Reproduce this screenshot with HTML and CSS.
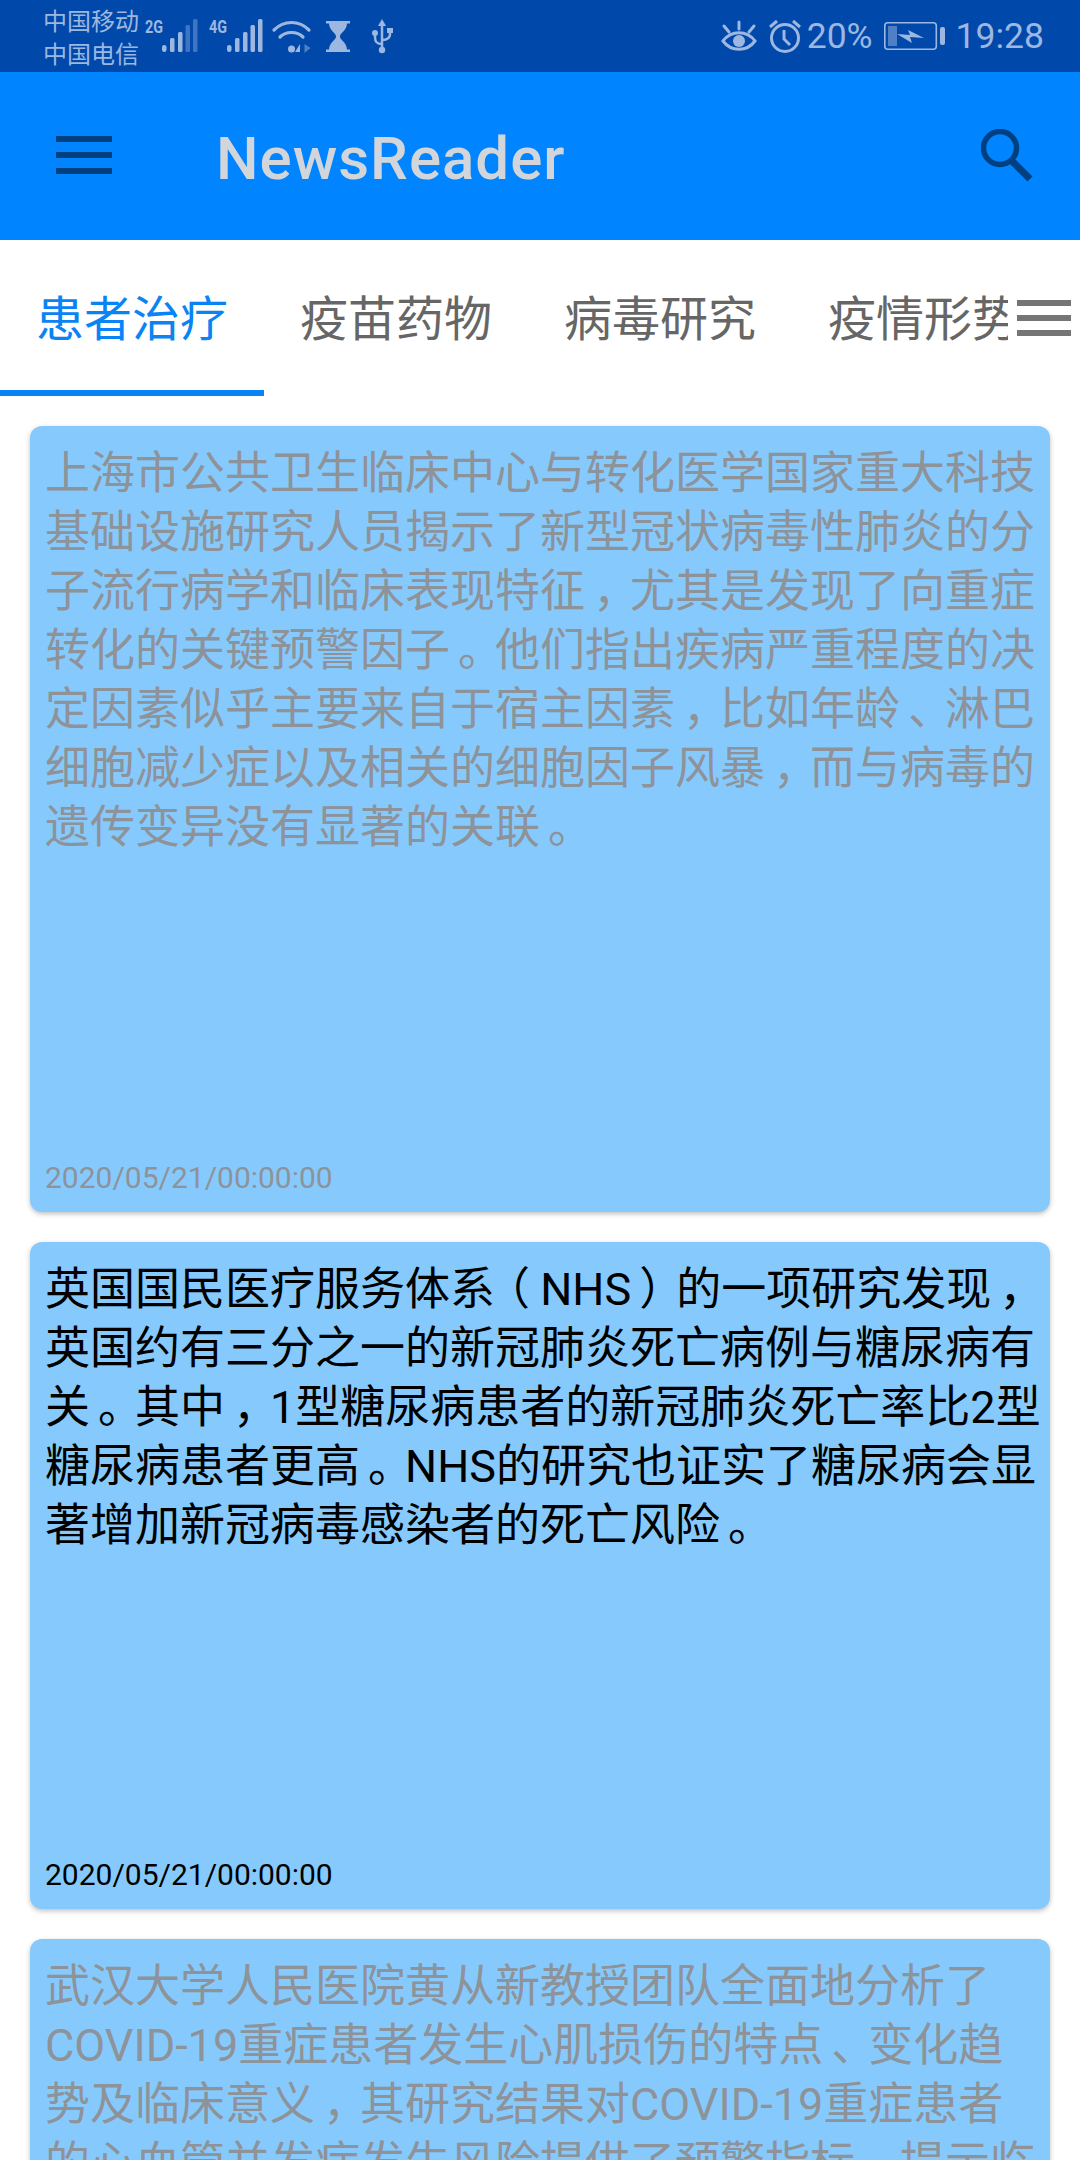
FILE: index.html
```html
<!DOCTYPE html>
<html lang="zh-CN">
<head>
  <meta charset="UTF-8">
  <title>NewsReader</title>
  <link rel="stylesheet" href="styles.css">
</head>
<body>
  <div class="status-bar">
    <div class="status-left">
      <div class="carriers"><span>中国移动</span><span>中国电信</span></div>
      <svg class="left-icons" width="250" height="40" viewBox="145 16 250 40" fill="#9db7e0">
        <text x="145" y="33" class="net-label" textLength="18" lengthAdjust="spacingAndGlyphs">2G</text>
        <rect x="162" y="45" width="4.500" height="7" rx="2.200"/>
        <rect x="170" y="38" width="4.500" height="14" rx="1.500"/>
        <rect x="178" y="32" width="4.500" height="20" rx="1.500"/>
        <rect x="185.500" y="25" width="4.500" height="27" rx="1.500" opacity=".4"/>
        <rect x="193" y="19" width="4.500" height="33" rx="1.500" opacity=".4"/>
        <text x="209" y="33" class="net-label" textLength="18" lengthAdjust="spacingAndGlyphs">4G</text>
        <rect x="227" y="45" width="4.500" height="7" rx="2.200"/>
        <rect x="235" y="38" width="4.500" height="14" rx="1.500"/>
        <rect x="243" y="32" width="4.500" height="20" rx="1.500"/>
        <rect x="250.500" y="25" width="4.500" height="27" rx="1.500"/>
        <rect x="258" y="19" width="4.500" height="33" rx="1.500"/>
        <g fill="none" stroke="#9db7e0" stroke-width="3.200" stroke-linecap="round">
          <path d="M274 30c10-10 25-10 35 0"/><path d="M280 37c6-6 17-6 23 0"/>
        </g>
        <circle cx="291.500" cy="49" r="3.500"/>
        <path d="M300 52v-8l-5 8z"/>
        <path d="M304.500 44l6 4-6 5z" opacity=".5"/>
        <path d="M326 21h24v2.500h-3c-.5 8-7 9-7 13s6.500 5 7 13h3v2.500h-24v-2.500h3c.5-8 7-9 7-13s-6.500-5-7-13h-3z"/>
        <g fill="none" stroke="#9db7e0" stroke-width="2.500">
          <path d="M382 24v26M382 44c-6 0-7-3-7-7v-2M382 40c6 0 8-2 8-6v-3"/>
        </g>
        <path d="M382 19l4 7h-8z"/><circle cx="382" cy="50" r="3.200"/><circle cx="375" cy="33" r="3"/><rect x="387" y="28" width="6" height="5"/>
      </svg>
    </div>
    <div class="status-right">
      <svg class="eye-icon" width="36" height="32" viewBox="721 21 36 32" fill="none" stroke="#9db7e0" stroke-width="3">
        <path d="M723 42c8-11 24-11 32 0-8 11-24 11-32 0z"/>
        <circle cx="739" cy="42" r="6" fill="#9db7e0" stroke="none"/>
        <path d="M739 23v7M724 27l5 6M754 27l-5 6" stroke-linecap="round"/>
      </svg>
      <svg class="alarm-icon" width="34" height="34" viewBox="769 19 34 34" fill="none" stroke="#9db7e0" stroke-width="3">
        <circle cx="786" cy="38" r="13.500"/><path d="M785 30v9l6 6M771 27l7-6M801 27l-7-6"/>
      </svg>
      <span class="status-text pct">20%</span>
      <svg class="battery-icon" width="61" height="30" viewBox="884 22 61 30">
        <rect x="884.800" y="23.800" width="51.500" height="26.500" rx="3" fill="none" stroke="#9db7e0" stroke-width="1.600"/>
        <rect x="888" y="27" width="9" height="20" fill="#9db7e0" opacity=".5"/>
        <path d="M897 35l13 1-2-5 16 8-14-1 2 6z" fill="#9db7e0"/>
        <rect x="940" y="28" width="5" height="18" rx="2" fill="#9db7e0"/>
      </svg>
      <span class="status-text time">19:28</span>
    </div>
  </div>

  <header class="app-bar">
    <svg class="menu-icon" width="56" height="40" viewBox="0 0 56 40" fill="#003f80">
      <rect y="0" width="56" height="6"/><rect y="16" width="56" height="6"/><rect y="32" width="56" height="6"/>
    </svg>
    <h1 class="app-title">NewsReader</h1>
    <svg class="search-icon" width="52" height="54" viewBox="0 0 52 54" fill="none" stroke="#003f80">
      <circle cx="19" cy="19" r="16.500" stroke-width="5.500"/><path d="M31 32l18 18" stroke-width="7"/>
    </svg>
  </header>

  <nav class="tabs">
    <div class="tab-list">
      <div class="tab active">患者治疗</div>
      <div class="tab">疫苗药物</div>
      <div class="tab">病毒研究</div>
      <div class="tab">疫情形势</div>
    </div>
    <svg class="tabs-more" width="54" height="36" viewBox="0 0 54 36" fill="#757575">
      <rect width="54" height="6"/><rect y="15" width="54" height="6"/><rect y="30" width="54" height="6"/>
    </svg>
  </nav>

  <main class="news-list">
    <article class="card read first">
      <p class="card-text">上海市公共卫生临床中心与转化医学国家重大科技<br>基础设施研究人员揭示了新型冠状病毒性肺炎的分<br>子流行病学和临床表现特征<span class="pt">，</span>尤其是发现了向重症<br>转化的关键预警因子<span class="pt">。</span>他们指出疾病严重程度的决<br>定因素似乎主要来自于宿主因素<span class="pt">，</span>比如年龄<span class="pt">、</span>淋巴<br>细胞减少症以及相关的细胞因子风暴<span class="pt">，</span>而与病毒的<br>遗传变异没有显著的关联<span class="pt">。</span></p>
      <time class="card-date">2020/05/21/00:00:00</time>
    </article>
    <article class="card second">
      <p class="card-text">英国国民医疗服务体<span class="before-open">系</span><span class="paren-open">（</span> NHS<span class="before-close"> </span><span class="paren-close">）</span>的一项研究发现<span class="pt">，</span><br>英国约有三分之一的新冠肺炎死亡病例与糖尿病有<br>关<span class="pt">。</span>其中<span class="pt">，</span>1型糖尿病患者的新冠肺炎死亡率比2型<br>糖尿病患者更高<span class="pt">。</span>NHS的研究也证实了糖尿病会显<br>著增加新冠病毒感染者的死亡风险<span class="pt">。</span></p>
      <time class="card-date">2020/05/21/00:00:00</time>
    </article>
    <article class="card read third">
      <p class="card-text">武汉大学人民医院黄从新教授团队全面地分析了<br>COVID-19重症患者发生心肌损伤的特点<span class="pt">、</span>变化趋<br>势及临床意义<span class="pt">，</span>其研究结果对COVID-19重症患者<br>的心血管并发症发生风险提供了预警指标<span class="pt">，</span>提示临</p>
    </article>
  </main>
</body>
</html>
```

FILE: styles.css
```css
html, body {
  margin: 0;
  padding: 0;
}
body {
  width: 1080px;
  height: 2160px;
  overflow: hidden;
  background: #fff;
  font-family: Roboto, "Noto Sans CJK SC", sans-serif;
}

.status-bar {
  height: 72px;
  background: #0049ab;
  display: flex;
  justify-content: space-between;
  align-items: center;
  padding: 0 36px 0 43px;
  color: #9db7e0;
}
.status-left, .status-right {
  display: flex;
  align-items: center;
}
.carriers {
  display: flex;
  flex-direction: column;
  width: 102px;
  padding-top: 5px;
  font-size: 24px;
  line-height: 33px;
}
.net-label {
  font-family: Roboto, sans-serif;
  font-size: 19px;
  font-weight: 700;
}
.status-text {
  font-size: 35.500px;
}
.alarm-icon {
  margin-left: 11px;
}
.pct {
  margin-left: 5px;
}
.battery-icon {
  margin-left: 11px;
}
.time {
  margin-left: 11px;
}

.app-bar {
  height: 168px;
  background: #0084ff;
  display: flex;
  align-items: center;
  padding: 0 47px 0 56px;
}
.menu-icon {
  margin-right: 104px;
}
.app-title {
  flex: 1;
  margin: 4px 0 0;
  font-size: 60px;
  font-weight: 500;
  letter-spacing: 1px;
  color: #d2d6da;
}

.tabs {
  height: 156px;
  display: flex;
  align-items: flex-start;
  position: relative;
}
.tab-list {
  display: flex;
  width: 1008px;
  overflow: hidden;
  height: 156px;
}
.tab {
  flex: none;
  width: 264px;
  height: 150px;
  line-height: 160px;
  text-align: center;
  font-size: 48px;
  color: #666;
}
.tab.active {
  color: #0a84f5;
  border-bottom: 6px solid #0a84f5;
}
.tabs-more {
  position: absolute;
  right: 9px;
  top: 60px;
}

.news-list {
  padding: 30px 30px 0;
  display: flex;
  flex-direction: column;
  gap: 30px;
}
.card {
  display: flex;
  flex-direction: column;
  justify-content: space-between;
  background: #86cafd;
  border-radius: 12px;
  padding: 18px 15px 14px;
  box-shadow: 0 2px 5px rgba(0, 0, 0, .25);
  color: #000;
}
.card.first {
  height: 754px;
}
.card.second {
  height: 635px;
}
.card.third {
  height: 400px;
}
.card.read {
  color: #8e9299;
}
.card-text {
  margin: 0;
  font-size: 45px;
  line-height: 59px;
  white-space: nowrap;
}
/* full-width punctuation sits nearer the middle of its cell on the device */
.pt {
  margin-left: 8px;
  letter-spacing: -8px;
}
.before-open {
  letter-spacing: -10px;
}
.paren-open {
  letter-spacing: -1px;
}
.before-close {
  letter-spacing: -3px;
}
.paren-close {
  letter-spacing: -8px;
}
.card-date {
  font-size: 30px;
  line-height: 40px;
}
```
